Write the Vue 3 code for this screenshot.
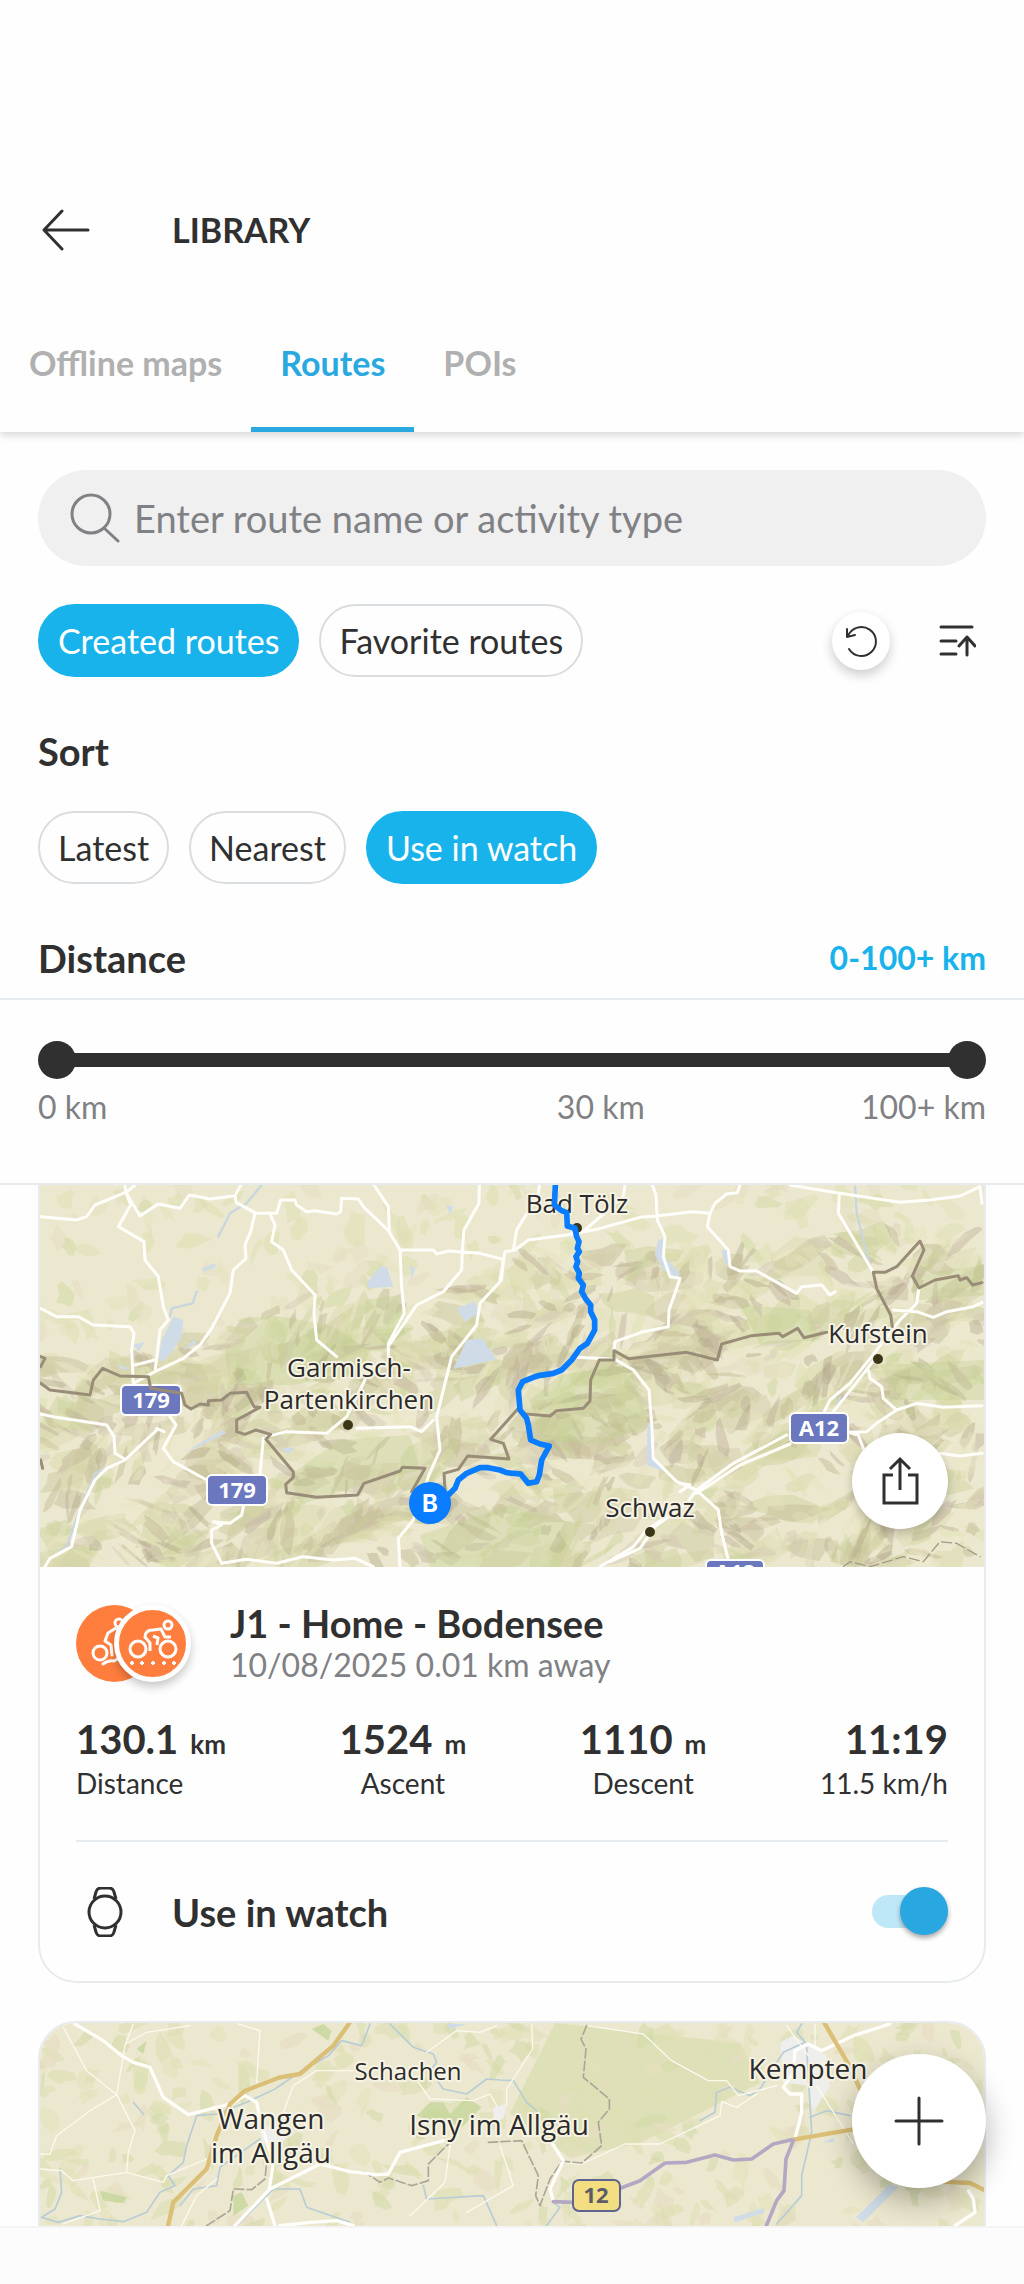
<template>
  <div class="page">
    <header class="header">
      <button class="back" aria-label="Back">
        <svg width="48" height="42" viewBox="0 0 48 42">
          <path d="M46 21H2M20 2L2 21l18 19" fill="none" stroke="#303030" stroke-width="3" stroke-linecap="round" stroke-linejoin="round" />
        </svg>
      </button>
      <h1>LIBRARY</h1>
    </header>
    <nav class="tabs">
      <a v-for="t in tabs" :key="t" href="#" class="tab" :class="{ active: t === tab }" @click.prevent="tab = t">{{ t }}</a>
    </nav>

    <section class="filters">
      <label class="search">
        <svg width="50" height="50" viewBox="0 0 50 50">
          <g fill="none" stroke="#808184" stroke-width="3" stroke-linecap="round">
            <circle cx="21" cy="21" r="19" />
            <path d="M34 35l14 13" />
          </g>
        </svg>
        <input v-model="keyword" type="text" placeholder="Enter route name or activity type" aria-label="Search routes" />
      </label>
      <div class="row kinds">
        <button v-for="k in kinds" :key="k" class="chip" :class="{ on: k === kind }" @click="kind = k">{{ k }}</button>
        <span class="space"></span>
        <button class="round reset" aria-label="Reset">
          <svg width="34" height="34" viewBox="0 0 34 34">
            <g fill="none" stroke="#303030" stroke-width="2" stroke-linecap="round" stroke-linejoin="round">
              <path d="M5 25A14.5 14.5 0 1 0 4 12" />
              <path d="M3 5v8l8-2" />
            </g>
          </svg>
        </button>
        <button class="plain" aria-label="Hide filters">
          <svg width="38" height="34" viewBox="0 0 38 34">
            <path d="M3 3h31M3 17h15M3 30h15M29 31V13M21 22l8-9l8 9" fill="none" stroke="#303030" stroke-width="3" stroke-linecap="round" stroke-linejoin="round" />
          </svg>
        </button>
      </div>
      <h2>Sort</h2>
      <div class="row sorts">
        <button v-for="s in sorts" :key="s" class="chip" :class="{ on: s === sort }" @click="sort = s">{{ s }}</button>
      </div>
      <div class="range-head">
        <h2>Distance</h2>
        <output>0-100+ km</output>
      </div>
    </section>

    <section class="range">
      <div class="slider">
        <div class="track"></div>
        <input v-model="from" type="range" min="0" max="100" aria-label="Minimum distance" />
        <input v-model="to" type="range" min="0" max="100" aria-label="Maximum distance" />
      </div>
      <div class="marks"><span>0 km</span><span>30 km</span><span>100+ km</span></div>
    </section>

    <main class="list">
      <article class="card first">
        <div class="map">
          <svg viewBox="0 0 944 382" preserveAspectRatio="xMidYMid slice">
            <rect width="944" height="382" fill="#ece8cf" />
            <path v-for="(p, i) in fields" :key="'f' + i" :d="p.d" :fill="p.c" opacity=".55" />
            <path v-for="(p, i) in slopes" :key="'s' + i" :d="p.d" :fill="p.c" opacity=".45" />
            <path v-for="(p, i) in ridges" :key="'r' + i" :d="p.d" :fill="p.c" opacity=".4" />
            <!-- woods on the hillsides -->
            <g fill="#bfcf8c" opacity=".35">
              <path d="M185 165L230 130 290 140 330 165 320 190 250 200 190 200zM325 115L360 110 365 150 345 160 325 140zM250 290L300 255 370 250 380 285 320 300 260 320zM520 190L590 180 610 240 560 260 500 255 490 215zM700 120L770 125 780 155 720 160zM840 180L944 175V215L860 215zM380 350L470 320 540 340 520 382H390zM870 90L944 80V110L880 115z" />
            </g>
            <g transform="translate(-40 -15) scale(.33333)" fill="none" stroke-linejoin="round" stroke-linecap="round">
              <!-- lakes and rivers -->
              <path fill="#cfdbe6" d="M520 440L550 450 545 500 520 540 490 575 475 565 485 510zM1100 340L1140 290 1160 290 1180 350 1105 355zM1230 285L1245 295 1235 330zM1370 415L1425 395 1435 430 1395 455zM1400 510L1445 505 1490 568 1360 597zM605 295L645 280 648 290 610 305zM590 825L670 780 678 790 555 850zM400 525L435 515 415 545zM550 540L580 510 590 520zM845 835L885 832 865 852zM1340 105L1360 110 1350 135zM345 582L390 595 370 600zM1975 210L1990 205 1995 260 2040 310 2030 330 1990 300 1965 255zM2165 240L2185 240 2190 280 2175 285zM1943 755L1955 770 1960 865 1995 905 1940 885z" />
              <path stroke="#c8d6de" stroke-width="7" d="M785 45L740 100 690 130 655 200M590 365L578 400 515 415 510 440M375 870L285 910 235 1030 200 1130 150 1165M2565 50L2570 130 2610 290M2520 680L2510 710" />
              <!-- roads -->
              <path stroke="#fffefa" stroke-width="9" d="M122 140L230 150 260 140 285 105 375 68M375 45L378 68 420 138 475 102 540 115 568 75 630 87 705 77 722 45M705 77L708 97 768 130 830 130 842 90 885 90 890 105 920 125 945 122 1010 132 1022 125 1025 85 1075 87 1090 110 1165 182 1200 240 1300 240 1310 252 1345 243 1440 250 1510 268 1505 330 1440 400 1430 465 1355 560 1310 740 1320 840 1285 920 1240 1050 1195 1105 1200 1190M405 45L378 68 392 105 355 170 432 215 435 270 475 320 490 410 505 450 480 480 465 605M765 130L752 185 735 225 738 265 700 300 690 370 635 475 600 525 550 565 465 605 400 640M122 415L170 440 235 440 280 465 390 470 402 490 395 540 400 640M405 585L465 570M810 132L825 165 815 215 850 240 875 300 945 375 942 430 950 510 1010 560M1122 45L1165 110 1168 182M1200 240L1205 350 1213 430 1165 520 1165 560M1168 525L1250 405 1330 365 1385 300 1387 245 1392 180 1437 100 1438 45M122 732L160 740 320 765 342 800 345 850 375 868M470 780L375 870 320 895 285 930 240 1020 215 1130 150 1165 135 1190M470 775L492 785M510 740L528 765 490 835 520 875 620 930M730 1010L725 1035 690 1060 640 1055 665 1065 635 1080 635 1120 665 1180 740 1168 830 1180 910 1160 1000 1170 1065 1165 1120 1190M790 805L780 915M800 800L860 785 980 790 1040 740 1095 630M1070 775L1230 770 1265 785 1300 750" />
              <g transform="translate(1500 0)">
                <path stroke="#fffefa" stroke-width="9" d="M0 330L15 245 45 240 85 210 200 195 290 178 420 142 470 138 575 125 630 130 645 100 680 72 712 68 720 45M630 130L622 170 685 240 690 290 720 303 770 303 890 370 905 350 965 345 990 375 1005 365M457 45L468 75 472 150 495 200 490 260 510 320 540 325 525 370 507 420 505 470 430 485 345 515 342 540M118 45L115 75 50 180 40 240M375 45L370 80 255 180M230 562L345 568 400 600 447 660 455 760 460 865 530 935 590 960 700 880 860 795M540 965L570 945 540 940M590 970L720 885 870 822M970 730L990 690 1050 640 1115 560 1200 450 1250 400 1257 354M1000 725L1060 650 1130 560M1180 420L1250 425 1300 442 1340 425 1420 410 1446 398M1105 600L1110 625 1145 650 1150 685 1190 720 1250 700 1330 712 1446 707M1190 720L1130 760 1100 785 1045 787 1075 795 1090 835M1320 850L1380 858 1446 850M870 45L1010 68 1200 97 1290 90 1380 78 1440 50 1446 100M1018 70L1015 130 1120 307M590 960L560 1000 440 1080 400 1130 300 1190M560 1000L465 1070 420 1135 330 1175M600 970L655 1020 665 1090 685 1170" />
                <path stroke="#a09a86" stroke-width="4" stroke-dasharray="30 12" d="M1030 1190L1050 1175 1110 1190 1210 1160 1270 1175 1320 1115 1370 1120 1440 1160" />
                <path stroke="#998d77" stroke-width="9" d="M80 732L150 738 170 722 250 715 270 693 272 630 298 570 342 570 342 542 385 566 560 547 652 570 665 522 755 497 837 490 848 500 893 475 912 503 980 487M1177 470L1172 435 1130 355 1120 307 1155 307 1190 290 1260 213 1272 240 1237 318 1257 354 1305 330 1375 317 1380 330 1400 323 1418 345 1446 338" />
              </g>
            </g>
            <g class="shield">
              <rect x="81" y="200" width="60" height="30" rx="5" /><text x="111" y="223">179</text>
              <rect x="167" y="290" width="60" height="30" rx="5" /><text x="197" y="313">179</text>
              <rect x="750" y="228" width="58" height="30" rx="5" /><text x="779" y="251">A12</text>
              <rect x="666" y="375" width="58" height="30" rx="5" /><text x="695" y="395">A12</text>
            </g>
            <g transform="translate(-40 -15) scale(.33333)" fill="none" stroke-linejoin="round" stroke-linecap="round">
              <path stroke="#998d77" stroke-width="9" d="M122 560L135 565 122 590M122 640L150 660 270 675 280 630 308 595 360 618 445 620 452 655 545 670 555 705 573 717 600 702 625 705 625 692 665 690 690 670 740 667 762 710 780 712 710 750 710 785 735 793 768 780 812 793 798 808 880 905 880 922 857 943 860 968 950 982 1073 975 1092 940 1200 903 1207 892 1275 895 1235 965M1335 960L1332 910 1375 898 1403 858 1527 867 1510 820 1472 808 1555 715M122 870L128 895" />
            </g>
            <g class="place">
              <text x="309" y="192">Garmisch-</text>
              <text x="309" y="224">Partenkirchen</text>
              <text x="537" y="28">Bad Tölz</text>
              <text x="838" y="158">Kufstein</text>
              <text x="610" y="332">Schwaz</text>
            </g>
            <g fill="#3c3619">
              <circle cx="308" cy="240" r="5" /><circle cx="537" cy="43" r="5" /><circle cx="838" cy="174" r="5" /><circle cx="610" cy="347" r="5" />
            </g>
            <path transform="translate(460 -15) scale(.33333)" fill="none" stroke="#0a7cff" stroke-width="17" stroke-linejoin="round" stroke-linecap="round" d="M167 30L163 105 185 122 200 128 202 168 225 175 230 200 237 215 232 235 238 245 228 260 233 275 228 290 238 310 235 325 250 345 245 365 258 388 272 405 272 425 284 450 284 480 262 520 240 535 215 570 185 600 160 610 120 616 100 622 68 635 55 660 60 720 80 745 85 765 92 810 120 822 148 828 125 870 118 915 110 935 85 940 62 912 20 908 0 900 -35 893 -60 893 -100 910 -125 930 -135 955 -155 975" />
            <circle cx="390" cy="318" r="21" fill="#0a7cff" />
            <text class="pin" x="390" y="327">B</text>
          </svg>
          <button class="round share" aria-label="Share">
            <svg width="40" height="52" viewBox="0 0 40 52">
              <path d="M13 20H4v28h33V20h-9M20 35V4M10 14L20 4l10 10" fill="none" stroke="#303030" stroke-width="3" />
            </svg>
          </button>
        </div>
        <div class="body">
          <div class="title">
            <div class="badges">
              <span class="badge">
                <svg width="52" height="52" viewBox="0 0 52 52">
                  <g fill="none" stroke="#fff" stroke-width="3" stroke-linecap="round" stroke-linejoin="round">
                    <circle cx="11" cy="36" r="7" /><circle cx="30" cy="6" r="4" />
                    <path d="M23 38l-1-10-6-4 3-8 8-5 4 2M27 22l6 2-3 9M14 47q5-4 11-3l9-5" />
                  </g>
                </svg>
              </span>
              <span class="badge over">
                <svg width="52" height="52" viewBox="0 0 52 52">
                  <g fill="none" stroke="#fff" stroke-width="3" stroke-linejoin="round">
                    <circle cx="11" cy="32" r="8" /><circle cx="41" cy="32" r="8" /><circle cx="41" cy="8" r="4" />
                    <path d="M23 34v-8l-5-6q0-7 8-7l8-1 4 8h6M26 19l5 2-1 7" />
                  </g>
                  <path d="M3 46h4M13 46h4M24 46h4M35 46h4M45 46h4M5 44v4M15 44v4M26 44v4M37 44v4M47 44v4" stroke="#fff" stroke-width="2" />
                </svg>
              </span>
            </div>
            <div>
              <h2>J1 - Home - Bodensee</h2>
              <p>10/08/2025 0.01 km away</p>
            </div>
          </div>
          <div class="stats">
            <div v-for="s in stats" :key="s.label" class="stat">
              <div class="value">{{ s.value }}<small v-if="s.unit">{{ s.unit }}</small></div>
              <div class="name">{{ s.label }}</div>
            </div>
          </div>
          <label class="watch">
            <svg width="38" height="50" viewBox="0 0 38 50">
              <g fill="none" stroke="#303030" stroke-width="3" stroke-linejoin="round">
                <circle cx="19" cy="25" r="16" />
                <path d="M8 12l2-7q1-4 5-4h8q4 0 5 4l2 7M8 38l2 7q1 4 5 4h8q4 0 5-4l2-7" />
              </g>
            </svg>
            <span>Use in watch</span>
            <input v-model="inWatch" type="checkbox" role="switch" />
          </label>
        </div>
      </article>

      <article class="card">
        <div class="map">
          <svg viewBox="0 0 944 382" preserveAspectRatio="xMidYMin slice">
            <rect width="944" height="382" fill="#ece8cf" />
            <path d="M515 0L700 20 720 60 600 120 530 135 470 90z" fill="#dbddb0" opacity=".8" />
            <path v-for="(p, i) in meadows" :key="'m' + i" :d="p.d" :fill="p.c" opacity=".6" />
            <g transform="translate(-40 -24) scale(.33333)" fill="none" stroke-linejoin="round" stroke-linecap="round">
              <path fill="#cfdbe6" d="M2670 555L2695 565 2590 670 2568 655zM2200 655L2290 628 2295 640 2205 670zM2470 430L2505 415 2500 430zM1340 75L1400 75 1350 90z" />
              <path fill="#eeeeec" d="M775 390L840 370 870 410 830 440 790 430zM1480 325L1520 315 1510 360 1480 370zM2340 130L2380 110 2480 170 2490 260 2440 340 2420 260 2350 250z" />
              <path fill="#c6d69a" d="M1250 350L1290 310 1330 310 1350 345 1400 295 1445 325 1380 390 1300 370zM935 90L970 75 995 95 985 125zM300 575L380 595 370 612 310 605zM700 590L725 580 745 620 700 650zM410 150L440 125 430 165z" opacity=".8" />
              <path stroke="#b8ccd6" stroke-width="5" d="M180 510L185 580 165 630 125 655 175 670 240 650 300 660 370 668 440 640 480 580 525 560 505 530 550 490 560 440 590 350 650 345 740 310 825 270 905 215 985 170 1025 125 1085 140 1110 75M1170 75L1240 145 1300 165 1310 190 1290 215 1330 270 1400 285 1460 240 1500 243 1540 245 1580 310 1610 335M540 620L580 570 650 560 660 505 780 420M710 680L820 570 900 570 920 625 1050 670M1270 560L1280 600 1450 590 1490 680M400 310L430 345M2100 365L2145 340 2150 280 2190 265 2250 290 2280 270 2350 160 2415 130 2390 100 2405 75M2420 145L2435 400 2405 530 2405 590 2330 675M2430 355L2480 335 2550 350M1660 610L1680 625 1640 680" />
              <path stroke="#fbf9ee" stroke-width="4" d="M190 85L260 215 350 287 270 335 170 410 150 465 122 465M350 287L375 140 400 75M375 135L440 100 570 80M350 287L405 395 385 460 380 520 490 550 500 530 620 480M122 510L185 515 220 545 380 520M280 540L300 635 190 675M715 75L780 95 770 250M850 340L880 260 950 215 1060 215M1255 250L1290 300 1420 305 1470 285 1490 320M1280 160L1370 95 1440 100 1490 80M1500 440L1540 560 1400 640M1350 440L1335 550 1230 650M545 680L590 590 650 540M1595 75L1598 150 1520 270 1520 320M1760 80L1930 105 2015 185 2125 245 2180 245 2215 290 2330 260M1690 490L1745 495 1875 435 1980 435 2160 350 2165 308 2210 325 2270 285M2360 80L2425 170M2445 75L2445 150M2450 260L2560 435" />
              <path stroke="#aba798" stroke-width="5" stroke-dasharray="28 10" d="M620 680L690 635 700 570 755 572 795 540 800 490M1050 518L1095 520 1140 550 1165 537 1235 560 1285 545 1285 495 1350 430M1760 80L1743 120 1758 150 1750 235 1828 300 1828 330 1795 370 1805 440 1745 492 1690 487M1465 430L1565 425 1615 530 1607 590 1620 620 1650 540 1690 480" />
              <path stroke="#fffefa" stroke-width="10" d="M225 75L310 125 365 170 400 190 450 205 490 295 565 347 650 325 690 315 735 290 770 310 785 380 820 490 808 570M705 680L810 570 960 495 1050 518 1130 527 1165 525 1200 460 1330 425M800 600L825 680M840 680L930 670 1010 665 1060 680M1655 430L1690 485 1650 570 1660 605M2385 420L2405 340 2405 285 2370 285 2350 265 2380 220 2385 155 2425 135 2465 155 2560 110 2670 75M2865 680L2925 640 2920 600 2905 575" />
              <path stroke="#dbbf76" stroke-width="13" d="M1050 70L1000 140 900 225 840 235 735 275 690 315 650 410 620 510 520 610 500 700M2472 70L2545 195 2580 270M2380 422L2555 392M2820 548L2910 552 2950 572" />
              <path stroke="#b3a8c4" stroke-width="11" d="M1855 570L1920 545 1995 492 2060 490 2145 468 2200 483 2255 480 2320 435 2375 422M1660 608L1720 610M2380 425L2358 480 2352 575 2330 605 2295 690" />
            </g>
            <g class="shield yellow">
              <rect x="533" y="157" width="47" height="31" rx="6" /><text x="556" y="180">12</text>
            </g>
            <g class="place big">
              <text class="small" x="368" y="57">Schachen</text>
              <text x="231" y="106">Wangen</text>
              <text x="231" y="140">im Allgäu</text>
              <text x="459" y="112">Isny im Allgäu</text>
              <text x="768" y="56">Kempten</text>
            </g>
          </svg>
        </div>
      </article>
    </main>
    <footer class="bottom">
      <button class="round fab" aria-label="Add route">
        <svg width="50" height="50" viewBox="0 0 50 50">
          <path d="M25 2v46M2 25h46" stroke="#303030" stroke-width="3" stroke-linecap="round" />
        </svg>
      </button>
    </footer>
  </div>
</template>

<script setup>
import { ref } from "vue";

const tabs = ["Offline maps", "Routes", "POIs"];
const tab = ref("Routes");
const kinds = ["Created routes", "Favorite routes"];
const kind = ref("Created routes");
const sorts = ["Latest", "Nearest", "Use in watch"];
const sort = ref("Use in watch");
const keyword = ref("");
const from = ref(0);
const to = ref(100);
const inWatch = ref(true);
const stats = [
  { value: "130.1", unit: "km", label: "Distance" },
  { value: "1524", unit: "m", label: "Ascent" },
  { value: "1110", unit: "m", label: "Descent" },
  { value: "11:19", unit: "", label: "11.5 km/h" },
];

// fixed seed so that the terrain is the same on every load
let seed = 7;
const rnd = () => {
  seed = (seed * 16807) % 2147483647;
  return seed / 2147483647;
};

// irregular patch around x,y: long and thin when w is much larger than h
function patch(x, y, w, h, angle, colors) {
  const n = 9;
  let d = "";
  for (let i = 0; i < n; i++) {
    const a = (i / n) * Math.PI * 2;
    const r = 0.5 + rnd() * 0.7;
    const px = Math.cos(a) * w * r;
    const py = Math.sin(a) * h * r;
    const rx = x + px * Math.cos(angle) - py * Math.sin(angle);
    const ry = y + px * Math.sin(angle) + py * Math.cos(angle);
    d += (i ? "L" : "M") + rx.toFixed(1) + " " + ry.toFixed(1);
  }
  return { x, y, d: d + "z", c: colors[Math.floor(rnd() * colors.length)] };
}

function scatter(count, h, make) {
  const out = [];
  for (let i = 0; i < count; i++) out.push(make(rnd() * 944, rnd() * h));
  return out;
}

// the alps fill the lower part and rise higher towards the east
const alpine = (p) => p.y > Math.max(165 - p.x * 0.2, 45) + Math.sin(p.x / 50) * 12 + 12;

const fields = scatter(280, 240, (x, y) =>
  patch(x, y, 6 + rnd() * 16, 4 + rnd() * 9, rnd() * 3, ["#dfe0b5", "#dcdfb0", "#e3e2bd", "#d3dba5", "#e6dec3"])
);
const slopes = scatter(420, 382, (x, y) =>
  patch(x, y, 16 + rnd() * 26, 8 + rnd() * 12, -0.3 + (rnd() - 0.5), ["#cdd09b", "#d6d6a6", "#c9c79b", "#dcdab0", "#c5bd98", "#d3cba9"])
).filter(alpine);
// slopes turn with the valleys, so neighbours share a direction
const ridges = scatter(1300, 382, (x, y) =>
  patch(x, y, 7 + rnd() * 17, 2 + rnd() * 6, Math.sin(x / 45 + y / 30) * 1.1 - 0.3 + (rnd() - 0.5) * 0.6, ["#b0a684", "#bba998", "#beb38f", "#efead0", "#ebe7c6", "#e9e5c2", "#e6e4be", "#c9d297", "#dfe0b0", "#d2c6b3"])
).filter(alpine);
const meadows = scatter(330, 215, (x, y) =>
  patch(x, y, 5 + rnd() * 15, 3 + rnd() * 8, rnd() * 3, ["#dfe0b6", "#dcdfb0", "#e2e1ba", "#d4dba8", "#e6dcc2", "#dcdeb4"])
);
</script>

<style>
body {
  margin: 0;
  background: #fefefe;
}
</style>
<style scoped>
.page {
  height: 100vh;
  display: flex;
  flex-direction: column;
  font-family: Lato, "Open Sans", sans-serif;
  font-size: 34px;
  line-height: 40px;
  color: #303030;
  background: #fefefe;
}
button {
  font: inherit;
  color: inherit;
  padding: 0;
  border: 0;
  background: none;
  cursor: pointer;
}
svg {
  display: block;
  flex: none;
}
h1,
h2,
p {
  margin: 0;
}
h1 {
  font-size: 34px;
}
h2 {
  font-size: 38px;
  line-height: 44px;
}
.header {
  flex: none;
  position: relative;
  z-index: 1;
  display: flex;
  align-items: center;
  gap: 82px;
  height: 128px;
  padding: 166px 42px 0;
  background: #fefefe;
}
.tabs {
  flex: none;
  display: flex;
  box-shadow: 0 3px 8px rgba(0, 0, 0, 0.16);
}
.tab {
  padding: 49px 29px 44px;
  border-bottom: 5px solid transparent;
  color: #b0b0b0;
  font-weight: bold;
  text-decoration: none;
}
.tab.active {
  color: #2aa9e0;
  border-color: #2aa9e0;
}
.filters {
  flex: none;
  padding: 38px 38px 18px;
  border-bottom: 2px solid #e7ebee;
}
.search {
  display: flex;
  align-items: center;
  gap: 14px;
  height: 96px;
  padding: 0 32px;
  border-radius: 48px;
  background: #f0f0f0;
}
.search input {
  flex: 1;
  min-width: 0;
  border: 0;
  padding: 0;
  outline: none;
  background: none;
  font: inherit;
  font-size: 38px;
  color: #303030;
}
.search input::placeholder {
  color: #808184;
}
.row {
  display: flex;
  align-items: center;
  gap: 20px;
}
.kinds {
  margin: 38px 0 52px;
}
.sorts {
  margin: 38px 0 52px;
}
.chip {
  height: 73px;
  padding: 0 18px;
  border: 2px solid #d9dde0;
  border-radius: 37px;
}
.chip.on {
  border-color: #19b3ec;
  background: #19b3ec;
  color: #fff;
}
.space {
  flex: 1;
}
.round {
  display: grid;
  place-items: center;
  border-radius: 50%;
  background: #fff;
}
.reset {
  width: 58px;
  height: 58px;
  box-shadow: 0 5px 12px rgba(0, 0, 0, 0.2);
}
.plain {
  margin: 0 10px 0 28px;
}
.range-head {
  display: flex;
  justify-content: space-between;
  align-items: center;
}
.range-head output {
  font-size: 32px;
  color: #19b3ec;
  font-weight: bold;
}
.range {
  flex: none;
  padding: 41px 38px 56px;
  border-bottom: 2px solid #e7ebee;
  color: #808184;
}
.slider {
  position: relative;
  height: 38px;
  display: flex;
  align-items: center;
}
.track {
  flex: 1;
  height: 14px;
  margin: 0 19px;
  background: #303030;
}
.slider input {
  position: absolute;
  inset: 0;
  width: 100%;
  height: 38px;
  margin: 0;
  appearance: none;
  background: none;
  pointer-events: none;
}
.slider input::-webkit-slider-thumb {
  appearance: none;
  width: 38px;
  height: 38px;
  border-radius: 50%;
  background: #303030;
  pointer-events: auto;
}
.marks {
  display: grid;
  grid-template-columns: 28fr 36fr 36fr;
  margin-top: 8px;
  font-size: 32px;
}
.marks span + span {
  text-align: right;
}
.list {
  flex: 1;
  min-height: 0;
  overflow: hidden;
  padding: 0 38px;
}
.card {
  margin-bottom: 38px;
  border: 2px solid #e7ebee;
  border-radius: 38px;
  overflow: hidden;
}
.card.first {
  border-top: 0;
  border-radius: 0 0 38px 38px;
}
.map {
  position: relative;
}
.map > svg {
  width: 100%;
  height: 382px;
}
.place {
  font-family: "Open Sans", "Noto Sans", sans-serif;
  font-size: 26px;
  text-anchor: middle;
  fill: #2b2b2b;
  stroke: #f6f3e4;
  stroke-width: 4px;
  stroke-linejoin: round;
  paint-order: stroke;
}
.place.big {
  font-size: 28px;
}
.place .small {
  font-size: 24px;
}
.shield rect {
  fill: #6c78bd;
  stroke: #fff;
  stroke-width: 2px;
}
.shield text {
  font-family: "Open Sans", "Noto Sans", sans-serif;
  font-size: 22px;
  font-weight: bold;
  text-anchor: middle;
  fill: #fff;
}
.shield.yellow rect {
  fill: #f3de82;
  stroke: #5d648f;
}
.shield.yellow text {
  fill: #5d5c66;
}
.pin {
  font-family: Inter, sans-serif;
  font-size: 24px;
  font-weight: bold;
  text-anchor: middle;
  fill: #fff;
}
.share {
  position: absolute;
  right: 36px;
  bottom: 38px;
  width: 96px;
  height: 96px;
  box-shadow: 0 4px 10px rgba(0, 0, 0, 0.22);
}
.body {
  padding: 34px 36px 0;
}
.title {
  display: flex;
  align-items: center;
  gap: 39px;
}
.title p {
  font-size: 32px;
  color: #808184;
}
.badges {
  display: flex;
}
.badge {
  display: grid;
  place-items: center;
  box-sizing: border-box;
  width: 77px;
  height: 77px;
  border-radius: 50%;
  background: #ff7e3e;
}
.badge.over {
  margin-left: -39px;
  border: 5px solid #fff;
  box-shadow: 0 5px 10px rgba(0, 0, 0, 0.22);
}
.stats {
  display: flex;
  justify-content: space-between;
  padding: 30px 0 37px;
  border-bottom: 2px solid #e7ebee;
}
.stat {
  text-align: center;
}
.stat:first-child {
  text-align: left;
}
.stat:last-child {
  text-align: right;
}
.value {
  font-size: 40px;
  line-height: 48px;
  font-weight: bold;
}
.value small {
  margin-left: 12px;
  font-size: 26px;
  line-height: 1;
}
.name {
  font-size: 28px;
  line-height: 40px;
}
.watch {
  display: flex;
  align-items: center;
  height: 139px;
  padding-left: 10px;
  font-size: 38px;
  font-weight: bold;
}
.watch span {
  flex: 1;
  padding-left: 48px;
}
.watch input {
  appearance: none;
  position: relative;
  width: 76px;
  height: 33px;
  margin: 0;
  border-radius: 17px;
  background: #e0e0e0;
}
.watch input::after {
  content: "";
  position: absolute;
  top: -8px;
  left: 0;
  width: 48px;
  height: 48px;
  border-radius: 50%;
  background: #fff;
  box-shadow: 0 3px 5px rgba(0, 0, 0, 0.35);
}
.watch input:checked {
  background: #bee8f8;
}
.watch input:checked::after {
  left: 28px;
  background: #29a7e0;
}
.bottom {
  flex: none;
  position: relative;
  height: 56px;
  border-top: 2px solid #f4f4f4;
  background: #fcfcfc;
}
.fab {
  position: absolute;
  right: 38px;
  bottom: 96px;
  width: 134px;
  height: 134px;
  box-shadow: 0 12px 30px rgba(0, 0, 0, 0.3);
}
</style>
